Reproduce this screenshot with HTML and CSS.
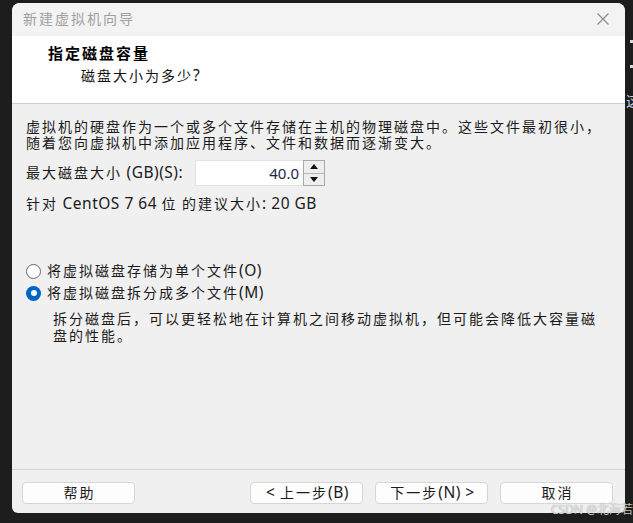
FILE: index.html
```html
<!DOCTYPE html>
<html lang="zh-CN">
<head>
<meta charset="utf-8">
<title>新建虚拟机向导</title>
<link rel="stylesheet" href="styles.css">
</head>
<body>
<div class="window">
  <div class="titlebar">
    <span class="title">新建虚拟机向导</span>
    <svg class="close" width="12" height="12" viewBox="0 0 12 12"><path d="M0.5 0.5 L11.5 11.5 M11.5 0.5 L0.5 11.5" stroke="#8a8a8a" stroke-width="1.2" fill="none"/></svg>
  </div>
  <div class="header">
    <div class="h-title">指定磁盘容量</div>
    <div class="h-sub">磁盘大小为多少<span class="lat">?</span></div>
  </div>
  <div class="content">
    <p class="intro">虚拟机的硬盘作为一个或多个文件存储在主机的物理磁盘中。这些文件最初很小，<br>随着您向虚拟机中添加应用程序、文件和数据而逐渐变大。</p>
    <div class="size-row">
      <span class="size-label">最大磁盘大小<span class="lat"> (GB)(S):</span></span>
      <div class="spinner">
        <div class="spin-input">40.0</div>
        <div class="spin-btns">
          <div class="spin-btn"><span class="tri-up"></span></div>
          <div class="spin-btn"><span class="tri-down"></span></div>
        </div>
      </div>
    </div>
    <p class="recommend">针对<span class="lat"> CentOS 7 64 </span>位<span class="lat"> </span>的建议大小<span class="lat">: 20 GB</span></p>
    <div class="radio-row first"><span class="radio"></span><span>将虚拟磁盘存储为单个文件<span class="lat">(O)</span></span></div>
    <div class="radio-row second"><span class="radio checked"></span><span>将虚拟磁盘拆分成多个文件<span class="lat">(M)</span></span></div>
    <p class="desc">拆分磁盘后，可以更轻松地在计算机之间移动虚拟机，但可能会降低大容量磁<br>盘的性能。</p>
  </div>
  <div class="footer">
    <button class="btn">帮助</button>
    <div class="btn-group">
      <button class="btn"><span class="lat">&lt; </span>上一步<span class="lat">(B)</span></button>
      <button class="btn">下一步<span class="lat">(N) &gt;</span></button>
      <button class="btn">取消</button>
    </div>
  </div>
</div>
<span class="mark mark1"></span>
<span class="mark mark2"></span>
<span class="edge-glyph">这</span>
<span class="watermark">CSDN @北海若</span>
</body>
</html>
```
FILE: styles.css
```css
html, body {
  margin: 0;
  padding: 0;
}
body {
  width: 633px;
  height: 523px;
  background: #1d1d1d;
  overflow: hidden;
  position: relative;
  font-family: "Noto Sans", "Noto Sans CJK SC", sans-serif;
  font-size: 14px;
  letter-spacing: 2px;
  color: #1a1a1a;
}
.lat {
  font-size: 15.5px;
  letter-spacing: 0.5px;
  line-height: 1;
}
.window {
  margin: 3px 0 0 12px;
  width: 613px;
  height: 510px;
  border-radius: 8px 8px 6px 6px;
  overflow: hidden;
  background: #f0f0f0;
  display: flex;
  flex-direction: column;
}
.titlebar {
  height: 33px;
  flex: none;
  background: #f3f3f3;
  display: flex;
  align-items: center;
  padding: 0 16px 2px 11px;
  box-sizing: border-box;
}
.title {
  color: #a0a0a0;
  line-height: 18px;
}
.close {
  margin-left: auto;
  display: block;
}
.header {
  height: 68px;
  flex: none;
  box-sizing: border-box;
  background: #ffffff;
  border-bottom: 1px solid #cdcdcd;
  padding-top: 8px;
}
.h-title {
  font-weight: bold;
  font-size: 15px;
  line-height: 18px;
  padding-left: 36px;
  color: #000;
}
.h-sub {
  line-height: 18px;
  margin-top: 5px;
  padding-left: 69px;
  color: #111;
}
.content {
  flex: 1;
  padding: 15px 0 0 14px;
}
.intro {
  margin: 0;
  line-height: 16px;
}
.size-row {
  margin-top: 9px;
  display: flex;
  align-items: center;
  height: 26px;
}
.size-label {
  width: 169px;
  flex: none;
  line-height: 18px;
}
.spinner {
  display: flex;
  height: 26px;
}
.spin-input {
  width: 108px;
  box-sizing: border-box;
  background: #fff;
  border: 1px solid #e2e2e2;
  border-right: none;
  text-align: right;
  padding-right: 4px;
  font-size: 15px;
  letter-spacing: 0;
  line-height: 24px;
  color: #1b2a44;
}
.spin-btns {
  width: 22px;
  display: flex;
  flex-direction: column;
  box-sizing: border-box;
  border: 1px solid #a9a9a9;
  background: #eeeeee;
}
.spin-btn {
  flex: 1;
  display: flex;
  align-items: center;
  justify-content: center;
}
.spin-btn + .spin-btn {
  border-top: 1px solid #b5b5b5;
}
.tri-up {
  width: 0;
  height: 0;
  border-left: 4px solid transparent;
  border-right: 4px solid transparent;
  border-bottom: 5px solid #111;
}
.tri-down {
  width: 0;
  height: 0;
  border-left: 4px solid transparent;
  border-right: 4px solid transparent;
  border-top: 5px solid #111;
}
.recommend {
  margin: 10px 0 0 0;
  line-height: 16px;
}
.radio-row {
  display: flex;
  align-items: center;
  line-height: 18px;
  gap: 6px;
}
.radio-row.first {
  margin-top: 50px;
}
.radio-row.second {
  margin-top: 4px;
}
.radio {
  width: 15px;
  height: 15px;
  box-sizing: border-box;
  border-radius: 50%;
  border: 1px solid #666;
  background: #fff;
  flex: none;
  position: relative;
}
.radio.checked {
  border: none;
  background: #0063c6;
}
.radio.checked::after {
  content: "";
  position: absolute;
  left: 4.5px;
  top: 4.5px;
  width: 6px;
  height: 6px;
  border-radius: 50%;
  background: #fff;
}
.desc {
  margin: 8px 0 0 27px;
  line-height: 17px;
}
.footer {
  flex: none;
  height: 44px;
  box-sizing: border-box;
  border-top: 1px solid #d2d2d2;
  padding: 12px 12px 0 10px;
  display: flex;
  justify-content: space-between;
  align-items: flex-start;
}
.btn-group {
  display: flex;
  gap: 12px;
}
.btn {
  width: 113px;
  height: 22px;
  box-sizing: border-box;
  background: #fdfdfd;
  border: 1px solid #d6d6d6;
  border-radius: 4px;
  font-family: "Noto Sans", "Noto Sans CJK SC", sans-serif;
  font-size: 14px;
  letter-spacing: 2px;
  color: #1a1a1a;
  padding: 0;
  line-height: 18px;
  text-indent: 2px;
}
.mark {
  position: absolute;
  width: 3px;
  height: 3px;
  background: #d8d8d8;
}
.mark1 { left: 630px; top: 40px; }
.mark2 { left: 630px; top: 65px; }
.edge-glyph {
  position: absolute;
  left: 626px;
  top: 92px;
  font-size: 14px;
  color: #c8d4e8;
  line-height: 18px;
}
.watermark {
  position: absolute;
  left: 551px;
  top: 502px;
  font-size: 12px;
  letter-spacing: 0;
  line-height: 16px;
  color: rgba(255, 255, 255, 0.75);
  text-shadow: 0 0 1px rgba(0, 0, 0, 0.5);
}
```
